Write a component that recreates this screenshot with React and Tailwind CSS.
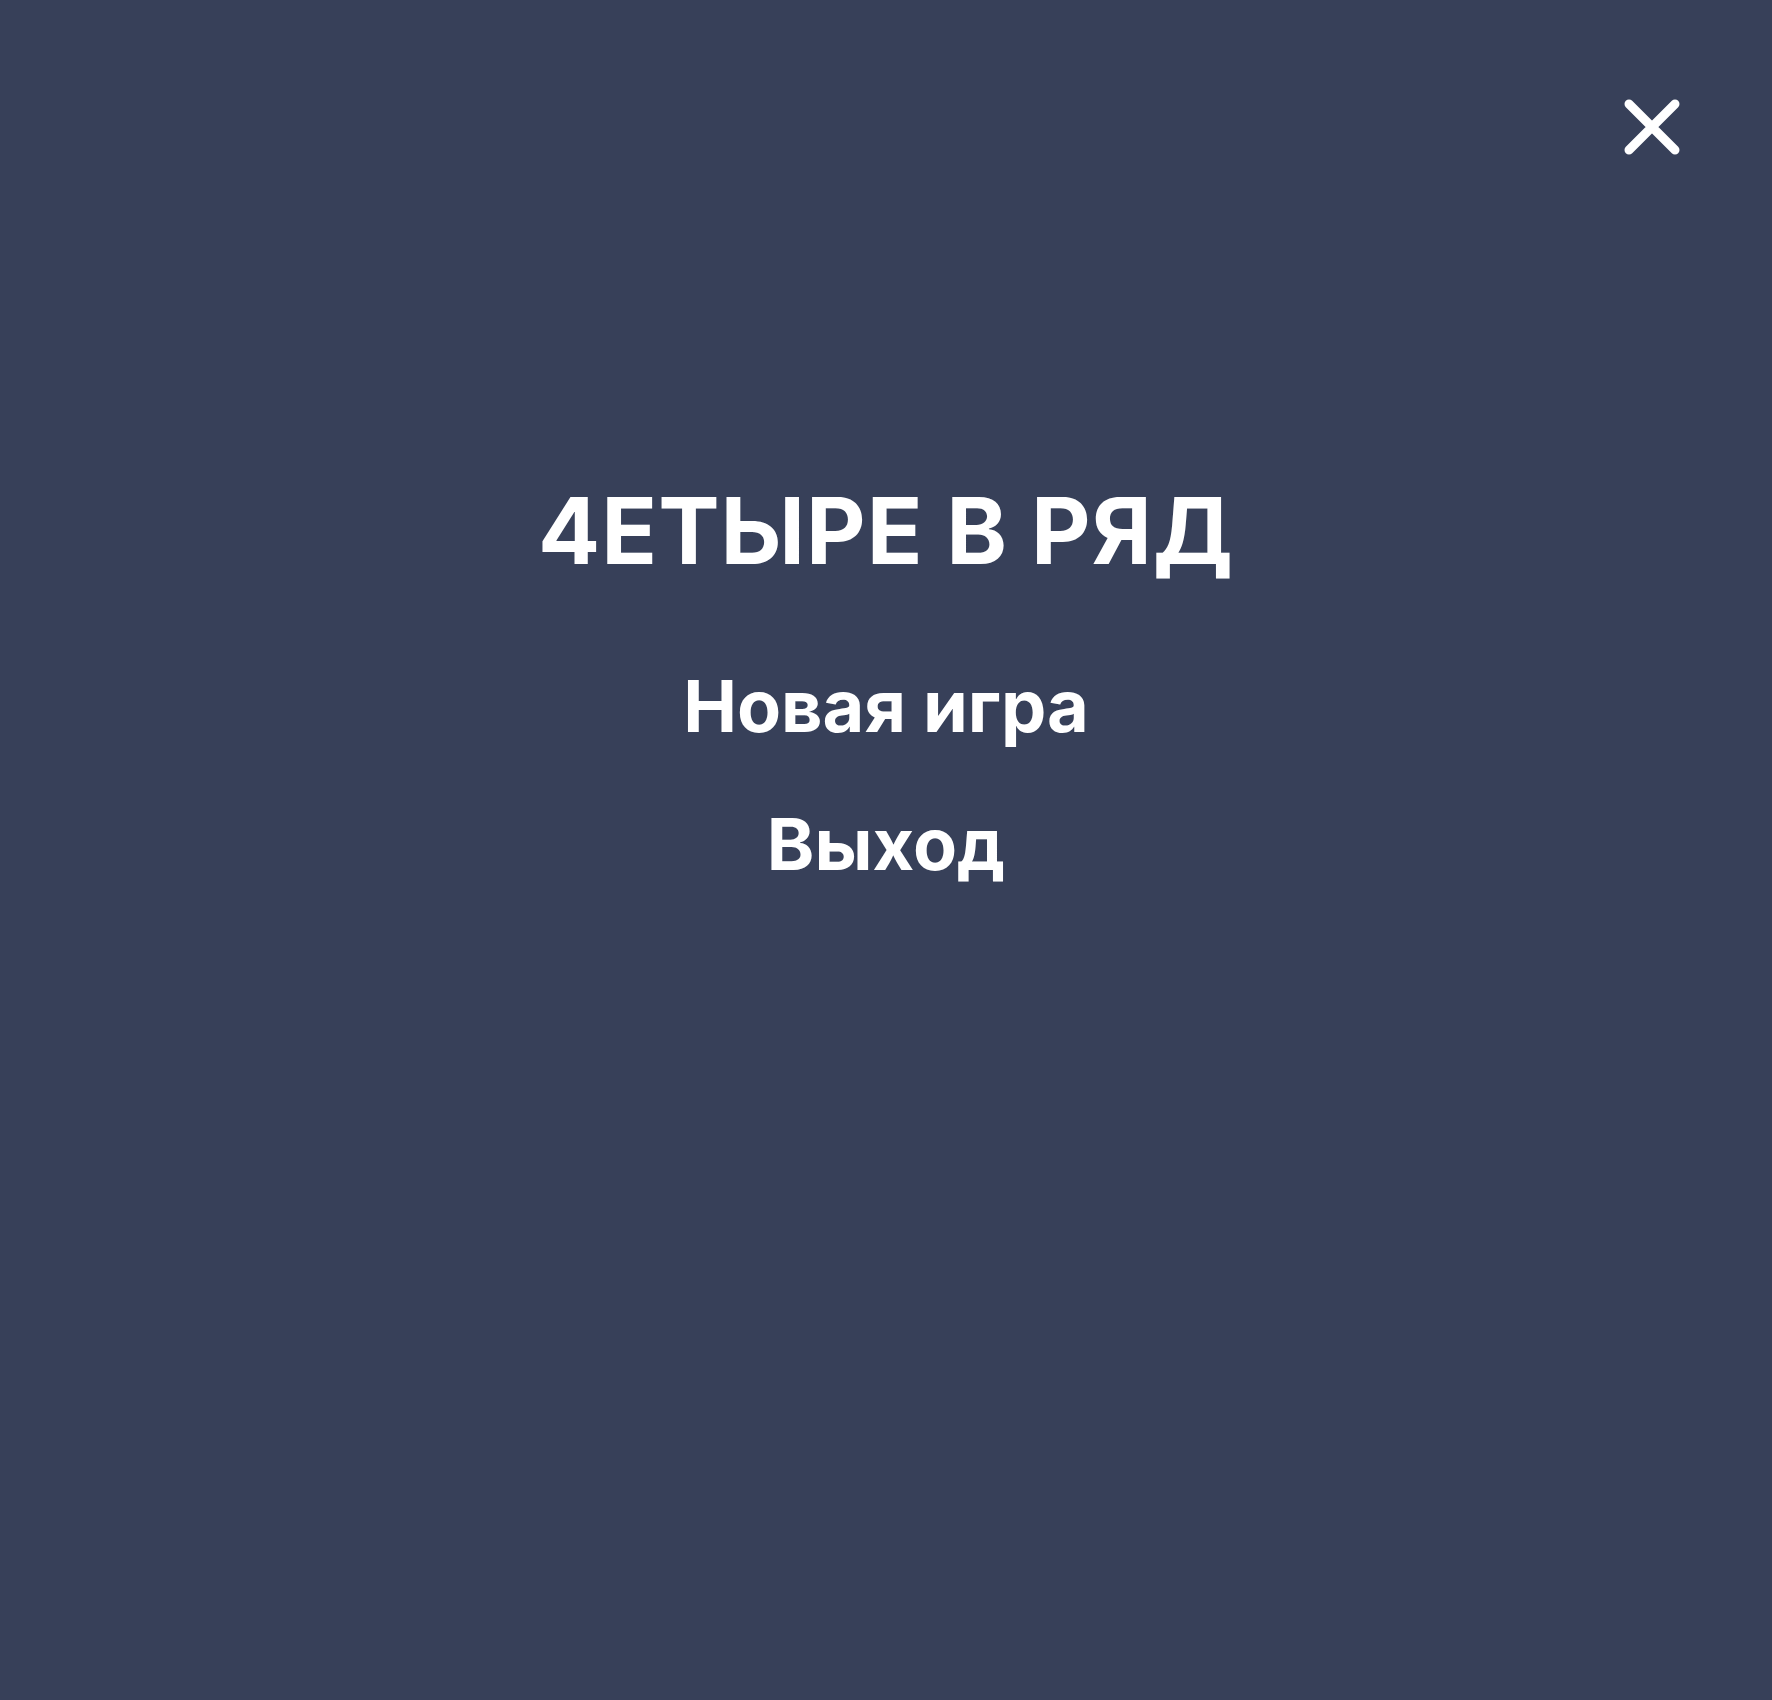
import React from 'react';

const CloseIcon = () => (
    <svg width="56" height="56" viewBox="0 0 56 56" fill="none">
        <path d="M5 5 L51 51 M51 5 L5 51" stroke="white" strokeWidth="9" strokeLinecap="round" />
    </svg>
);

const App = () => {
    return (
        <div className="min-h-screen w-full bg-[#374059] text-white flex flex-col" style={{ fontFamily: 'Inter, "Noto Sans", sans-serif' }}>
            <div className="flex justify-end pt-[99px] pr-[92px]">
                <button type="button" className="block">
                    <CloseIcon />
                </button>
            </div>

            <div className="flex flex-col items-center mt-[330px]">
                <h1 className="text-[92px] leading-none font-bold tracking-[1px]">4ЕТЫРЕ В РЯД</h1>
                <button type="button" className="mt-[93px] text-[72px] leading-none font-bold">Новая игра</button>
                <button type="button" className="mt-[66px] text-[72px] leading-none font-bold">Выход</button>
            </div>
        </div>
    );
};

export default App;
